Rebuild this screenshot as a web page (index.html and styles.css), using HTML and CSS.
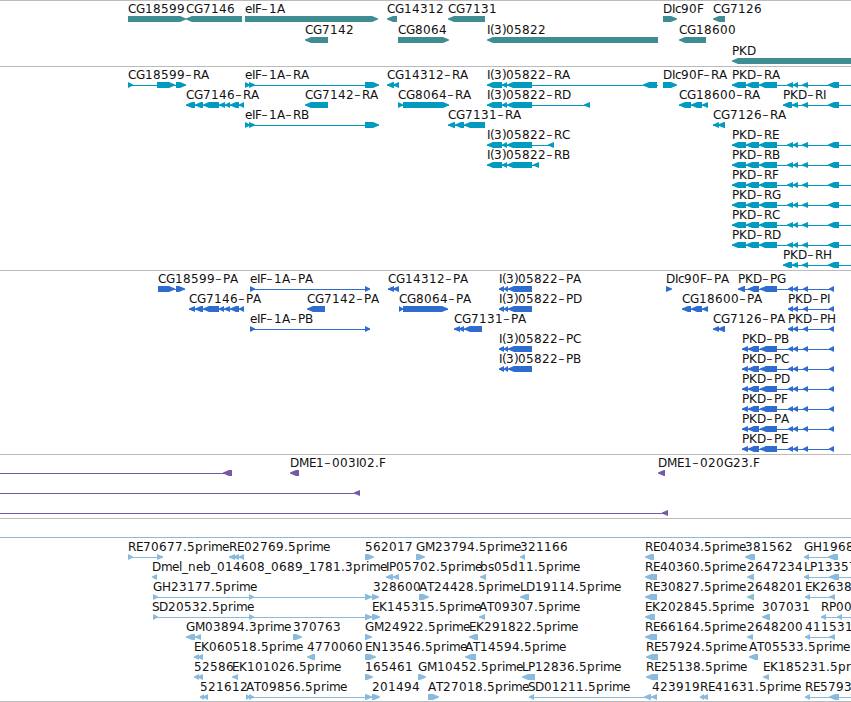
FILE: index.html
```html
<!DOCTYPE html>
<html lang="en">
<head>
  <meta charset="UTF-8" />
  <title>Genome tracks</title>
  <link rel="stylesheet" href="styles.css">
</head>
<body>

  <main class="tracks">
    <section class="track genes" id="genes"></section>
    <section class="track transcripts" id="transcripts"></section>
    <section class="track proteins" id="proteins"></section>
    <section class="track clones" id="clones"></section>
    <section class="track spacer"></section>
    <section class="track ests" id="ests"></section>
  </main>

  <script src="tracks.js"></script>
</body>
</html>
```

FILE: styles.css
```css
body { margin:0; background:#fff; overflow:hidden; }
.tracks { display:flex; flex-direction:column; width:851px; border-bottom:1px solid #bbb; }
.track { box-sizing:border-box; border-top:1px solid #bbb; overflow:hidden; }
.track svg { display:block; width:100%; height:100%; }
.genes { height:66px; color:#3f8c93; }
.transcripts { height:204px; color:#009bbf; }
.proteins { height:184px; color:#2f6ccf; }
.clones { height:64px; color:#7558a6; }
.spacer { height:19px; }
.ests { height:164px; color:#88bbdd; border-top-color:#88bbdd; }
.label { font-family:"DejaVu Sans", sans-serif; font-size:12px; fill:#111; }
.dash { font-family:"DejaVu Sans Light", "DejaVu Sans", sans-serif; font-size:19px; font-weight:200; }
.bar { fill:currentColor; }
.link { fill:currentColor; shape-rendering:crispEdges; }
```

FILE: tracks.js
```js
// item: [row, label, label x, direction, [start, end, start, end, ...], line end]
const exons = [732,746, 746,759, 759,777, 787,793, 793,798, 802,808, 828,839];
const exonsShort = [783,792, 792,798, 802,808, 828,839];
const cds = [742,748, 748,759, 760,777, 788,793, 793,798, 803,808, 829,834];
const cdsShort = [788,793, 793,798, 803,808, 829,834];
const l3 = [487,502, 502,507, 507,532];
const l3cds = [499,504, 504,508, 508,532];

const genes = [
  [0, 'CG18599', 128, 'R', [128,186]],
  [0, 'CG7146', 186, 'L', [186,242]],
  [0, 'eIF-1A', 245, 'R', [245,378]],
  [0, 'CG14312', 387, 'L', [387,397]],
  [0, 'CG7131', 448, 'L', [448,485]],
  [0, 'DIc90F', 663, 'R', [663,677]],
  [0, 'CG7126', 713, 'L', [713,725]],
  [1, 'CG7142', 305, 'L', [305,328]],
  [1, 'CG8064', 398, 'R', [398,449]],
  [1, 'I(3)05822', 487, 'L', [487,658]],
  [1, 'CG18600', 679, 'L', [679,706]],
  [2, 'PKD', 732, 'L', [732,860]]
];

const transcripts = [
  [0, 'CG18599-RA', 128, 'R', [128,133, 157,175, 176,186]],
  [0, 'eIF-1A-RA', 245, 'R', [245,250, 249,255, 365,379]],
  [0, 'CG14312-RA', 387, 'L', [387,394, 393,399]],
  [0, 'I(3)05822-RA', 487, 'L', [...l3, 643,657], 658],
  [0, 'DIc90F-RA', 663, 'R', [663,677]],
  [0, 'PKD-RA', 732, 'L', exons, 851],
  [1, 'CG7146-RA', 186, 'L', [186,195, 195,203, 203,219, 219,225, 225,230, 230,239, 239,244]],
  [1, 'CG7142-RA', 305, 'L', [305,328]],
  [1, 'CG8064-RA', 398, 'R', [398,403, 403,449]],
  [1, 'I(3)05822-RD', 487, 'L', [...l3, 584,590]],
  [1, 'CG18600-RA', 679, 'L', [679,691, 691,702, 702,708]],
  [1, 'PKD-RI', 783, 'L', exonsShort, 851],
  [2, 'eIF-1A-RB', 245, 'R', [245,250, 249,255, 365,379]],
  [2, 'CG7131-RA', 448, 'L', [448,455, 455,464, 464,485]],
  [2, 'CG7126-RA', 713, 'L', [713,719, 718,725]],
  [3, 'I(3)05822-RC', 487, 'L', [...l3, 548,554]],
  [4, 'I(3)05822-RB', 487, 'L', [...l3, 533,539]],
  [3, 'PKD-RE', 732, 'L', exons, 851],
  [4, 'PKD-RB', 732, 'L', exons, 851],
  [5, 'PKD-RF', 732, 'L', exons, 851],
  [6, 'PKD-RG', 732, 'L', exons, 851],
  [7, 'PKD-RC', 732, 'L', exons, 851],
  [8, 'PKD-RD', 732, 'L', exons, 851],
  [9, 'PKD-RH', 783, 'L', exonsShort, 851]
];

const proteins = [
  [0, 'CG18599-PA', 158, 'R', [158,175, 176,185]],
  [0, 'eIF-1A-PA', 250, 'R', [250,255, 365,370]],
  [0, 'CG14312-PA', 388, 'L', [388,394, 393,399]],
  [0, 'I(3)05822-PA', 499, 'L', l3cds],
  [0, 'DIc90F-PA', 666, 'R', [666,672]],
  [0, 'PKD-PG', 738, 'L', [738,745, ...cds.slice(2)]],
  [1, 'CG7146-PA', 189, 'L', [189,195, 195,203, 203,219, 219,224, 224,230, 230,239, 239,244]],
  [1, 'CG7142-PA', 307, 'L', [307,325]],
  [1, 'CG8064-PA', 399, 'R', [399,403, 403,448]],
  [1, 'I(3)05822-PD', 499, 'L', l3cds],
  [1, 'CG18600-PA', 682, 'L', [682,691, 691,702, 702,708]],
  [1, 'PKD-PI', 788, 'L', cdsShort],
  [2, 'eIF-1A-PB', 250, 'R', [250,255, 365,370]],
  [2, 'CG7131-PA', 454, 'L', [454,460, 459,464, 464,482]],
  [2, 'CG7126-PA', 713, 'L', [713,719, 718,725]],
  [2, 'PKD-PH', 788, 'L', cdsShort],
  [3, 'I(3)05822-PC', 499, 'L', l3cds],
  [4, 'I(3)05822-PB', 499, 'L', l3cds],
  [3, 'PKD-PB', 742, 'L', cds],
  [4, 'PKD-PC', 742, 'L', cds],
  [5, 'PKD-PD', 742, 'L', cds],
  [6, 'PKD-PF', 742, 'L', cds],
  [7, 'PKD-PA', 742, 'L', cds],
  [8, 'PKD-PE', 742, 'L', cds]
];

const clones = [
  [0, '', 0, 'L', [-10,-2, 223,232]],
  [0, 'DME1-003I02.F', 290, 'L', [290,299]],
  [0, 'DME1-020G23.F', 658, 'L', [658,665]],
  [1, '', 0, 'L', [-10,-2, 354,360]],
  [2, '', 0, 'L', [-10,-2, 662,668]]
];

const ests = [
  [0, 'RE70677.5prime', 128, 'R', [128,133, 157,163]],
  [0, 'RE02769.5prime', 229, 'L', [229,235, 233,239, 239,244]],
  [0, '562017', 365, 'R', [365,374]],
  [0, 'GM23794.5prime', 416, 'R', [416,425]],
  [0, '321166', 520, 'L', [520,525]],
  [0, 'RE04034.5prime', 645, 'L', [645,654]],
  [0, '381562', 745, 'L', [745,755]],
  [0, 'GH19688.5prime', 804, 'L', [804,809, 828,838]],
  [1, 'Dmel_neb_014608_0689_1781.3prime', 152, 'L', [152,157]],
  [1, 'IP05702.5prime', 386, 'L', [386,393, 393,399]],
  [1, 'bs05d11.5prime', 480, 'L', [480,486]],
  [1, 'RE40360.5prime', 645, 'L', [645,657]],
  [1, '2647234', 747, 'L', [747,754]],
  [1, 'LP13357.5prime', 804, 'L', [804,809, 829,839], 851],
  [2, 'GH23177.5prime', 153, 'R', [153,158, 249,254, 365,372]],
  [2, '328600', 373, 'R', [372,379]],
  [2, 'AT24428.5prime', 419, 'R', [419,429]],
  [2, 'LD19114.5prime', 520, 'L', [520,529]],
  [2, 'RE30827.5prime', 645, 'L', [645,657]],
  [2, '2648201', 747, 'L', [747,754]],
  [2, 'EK263813.5prime', 805, 'L', [805,810, 829,835]],
  [3, 'SD20532.5prime', 152, 'R', [153,158, 249,254, 365,372]],
  [3, 'EK145315.5prime', 372, 'R', [372,380]],
  [3, 'AT09307.5prime', 479, 'L', [479,485]],
  [3, 'EK202845.5prime', 645, 'L', [645,655]],
  [3, '307031', 762, 'L', [762,770]],
  [3, 'RP00', 821, 'L', [821,826, 837,842], 851],
  [4, 'GM03894.3prime', 186, 'L', [186,195, 195,201]],
  [4, '370763', 293, 'R', [293,302]],
  [4, 'GM24922.5prime', 365, 'R', [365,372]],
  [4, 'EK291822.5prime', 469, 'L', [469,478]],
  [4, 'RE66164.5prime', 645, 'L', [645,657]],
  [4, '2648200', 747, 'L', [747,753]],
  [4, '411531', 805, 'L', [805,810, 829,835]],
  [5, 'EK060518.5prime', 194, 'L', [194,199, 197,203]],
  [5, '4770060', 307, 'L', [307,315]],
  [5, 'EN13546.5prime', 365, 'R', [365,376]],
  [5, 'AT14594.5prime', 465, 'L', [465,476]],
  [5, 'RE57924.5prime', 646, 'L', [646,658]],
  [5, 'AT05533.5prime', 749, 'L', [749,758]],
  [6, '52586', 194, 'L', [194,199, 197,203]],
  [6, 'EK101026.5prime', 232, 'L', [232,238]],
  [6, '165461', 365, 'R', [365,373]],
  [6, 'GM10452.5prime', 418, 'R', [418,426]],
  [6, 'LP12836.5prime', 522, 'L', [522,535]],
  [6, 'RE25138.5prime', 646, 'L', [646,658]],
  [6, 'EK185231.5prime', 763, 'L', [763,769]],
  [7, '521612', 200, 'L', [200,204, 203,208]],
  [7, 'AT09856.5prime', 246, 'R', [246,250, 249,254, 365,372]],
  [7, '201494', 372, 'R', [372,380]],
  [7, 'AT27018.5prime', 428, 'R', [428,439]],
  [7, 'SD01211.5prime', 528, 'L', [529,534, 644,651, 651,657]],
  [7, '423919', 652, 'L', []],
  [7, 'RE41631.5prime', 700, 'L', [700,704, 702,708]],
  [7, 'RE57936.5prime', 805, 'L', [805,810, 829,839], 851]
];

// whole-pixel glyph advances; anything not listed is 8
const advance = { G:9, P:7, D:9, F:6, E:7, M:10, N:9, S:7, H:9, L:6, T:7, I:3,
  l:3, i:3, r:5, m:11, e:7, c:6, s:6, _:6, '.':4, '(':4, ')':4 };

function glyphX(text, x) {
  return [...text].map(ch => {
    const at = x;
    x += advance[ch] || 8;
    return at;
  }).join(' ');
}

// the larger dash sits lower than the letters
function glyphY(text, y) {
  return [...text].map(ch => ch === '-' ? y + 1.5 : y).join(' ');
}

function bar(a, b, y, dir) {
  const head = Math.min(6, b - a);
  const pts = dir === 'R'
    ? [[a, y], [b - head, y], [b, y + 2.5], [b, y + 3.5], [b - head, y + 6], [a, y + 6]]
    : [[b, y], [a + head, y], [a, y + 2.5], [a, y + 3.5], [a + head, y + 6], [b, y + 6]];
  return `<polygon class="bar" points="${pts.join(' ')}"/>`;
}

function draw(id, items, pitch, offset = 0) {
  let out = '';
  items.forEach(([row, label, x, dir, parts, lineEnd]) => {
    const top = row * pitch + offset;
    const end = lineEnd || parts[parts.length - 1];
    if (parts.length > 2) {
      out += `<rect class="link" x="${parts[0]}" y="${top + 18}" width="${end - parts[0]}" height="1"/>`;
    }
    for (let i = 0; i < parts.length; i += 2) {
      out += bar(parts[i], parts[i + 1], top + 15, dir);
    }
    if (label) {
      const text = label.replace(/-/g, '<tspan class="dash">-</tspan>');
      out += `<text class="label" x="${glyphX(label, x)}" y="${glyphY(label, top + 12)}">${text}</text>`;
    }
  });
  document.getElementById(id).innerHTML = `<svg>${out}</svg>`;
}

draw('genes', genes, 21);
draw('transcripts', transcripts, 20);
draw('proteins', proteins, 20);
draw('clones', clones, 20);
draw('ests', ests, 20, 1);
```
